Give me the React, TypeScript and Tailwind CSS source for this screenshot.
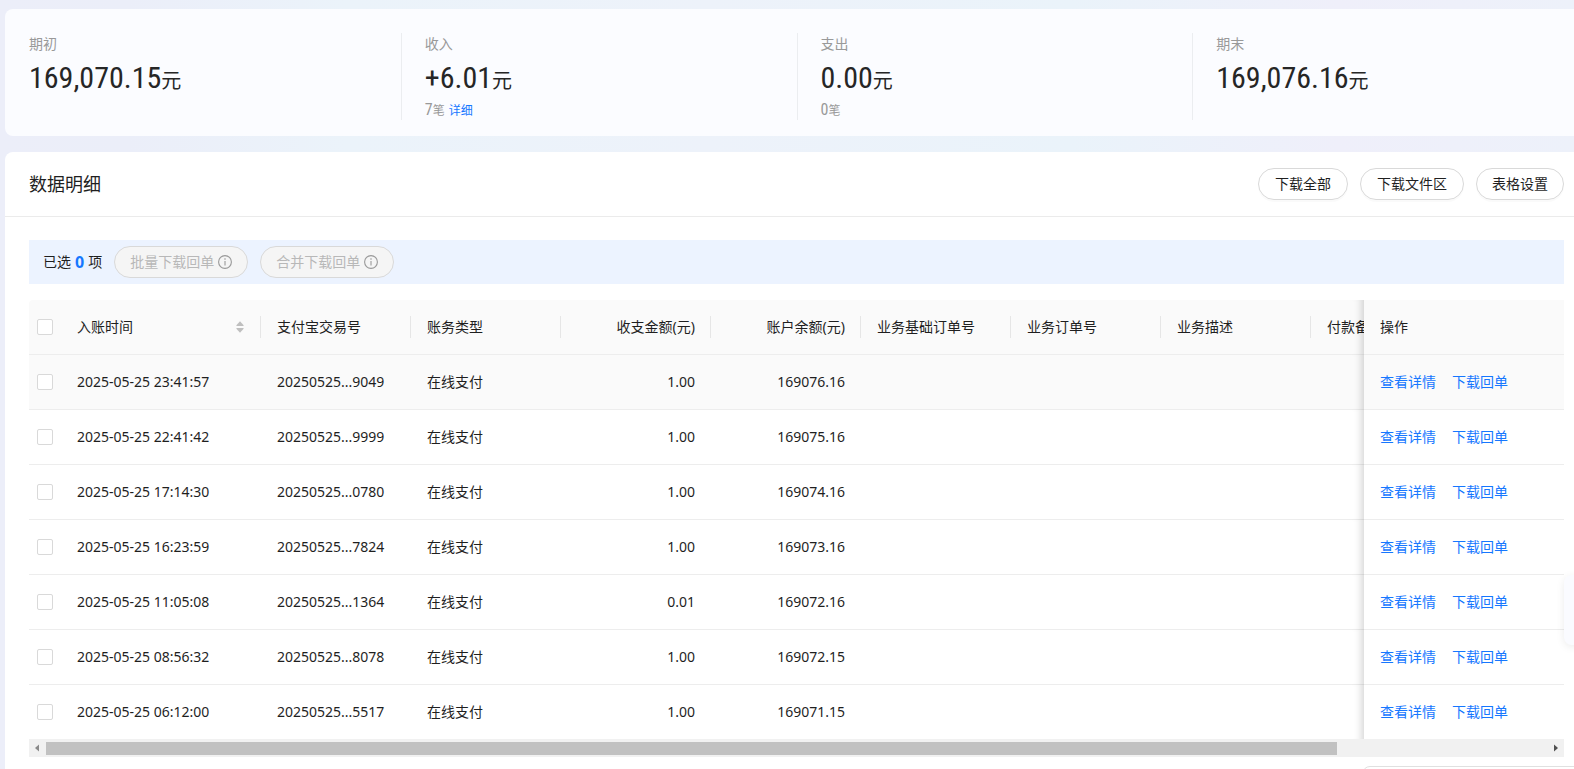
import { useState } from 'react'
import clsx from 'clsx'

type Column = {
  key: string
  title: string
  width: string
  align?: 'right'
  sortable?: boolean
}

type RecordRow = {
  time: string
  tradeNo: string
  type: string
  amount: string
  balance: string
}

const columns: Column[] = [
  { key: 'time', title: '入账时间', width: 'w-[200px]', sortable: true },
  { key: 'tradeNo', title: '支付宝交易号', width: 'w-[150px]' },
  { key: 'type', title: '账务类型', width: 'w-[150px]' },
  { key: 'amount', title: '收支金额(元)', width: 'w-[150px]', align: 'right' },
  { key: 'balance', title: '账户余额(元)', width: 'w-[150px]', align: 'right' },
  { key: 'baseOrderNo', title: '业务基础订单号', width: 'w-[150px]' },
  { key: 'orderNo', title: '业务订单号', width: 'w-[150px]' },
  { key: 'desc', title: '业务描述', width: 'w-[150px]' },
  { key: 'remark', title: '付款备注', width: 'w-[150px]' },
  { key: 'extra', title: '', width: 'w-[150px]' },
]

const rows: RecordRow[] = [
  { time: '2025-05-25 23:41:57', tradeNo: '20250525...9049', type: '在线支付', amount: '1.00', balance: '169076.16' },
  { time: '2025-05-25 22:41:42', tradeNo: '20250525...9999', type: '在线支付', amount: '1.00', balance: '169075.16' },
  { time: '2025-05-25 17:14:30', tradeNo: '20250525...0780', type: '在线支付', amount: '1.00', balance: '169074.16' },
  { time: '2025-05-25 16:23:59', tradeNo: '20250525...7824', type: '在线支付', amount: '1.00', balance: '169073.16' },
  { time: '2025-05-25 11:05:08', tradeNo: '20250525...1364', type: '在线支付', amount: '0.01', balance: '169072.16' },
  { time: '2025-05-25 08:56:32', tradeNo: '20250525...8078', type: '在线支付', amount: '1.00', balance: '169072.15' },
  { time: '2025-05-25 06:12:00', tradeNo: '20250525...5517', type: '在线支付', amount: '1.00', balance: '169071.15' },
]

const stats = [
  { label: '期初', value: '169,070.15' },
  { label: '收入', value: '+6.01', count: '7', detail: true },
  { label: '支出', value: '0.00', count: '0' },
  { label: '期末', value: '169,076.16' },
]

const checkboxClass =
  'block size-4 appearance-none rounded-xs border border-[#d9d9d9] bg-white checked:border-[#1677ff] checked:bg-[#1677ff]'

// sticky action column, with the shadow it casts on the scrolled cells
const stickyClass =
  "sticky right-0 before:pointer-events-none before:absolute before:top-0 before:-bottom-px before:-left-[30px] before:w-[30px] before:shadow-[inset_-10px_0_8px_-8px_rgba(0,0,0,0.18)] before:content-['']"

function InfoIcon() {
  return (
    <svg viewBox="0 0 14 14" className="size-3.5" fill="none" stroke="currentColor" aria-hidden="true">
      <circle cx="7" cy="7" r="6.4" strokeWidth="1.1" />
      <path d="M7 6v4.4" strokeWidth="1.1" />
      <circle cx="7" cy="4" r="0.8" fill="currentColor" stroke="none" />
    </svg>
  )
}

function SortIcon() {
  return (
    <svg viewBox="0 0 8 12" className="mr-px h-3 w-2" fill="#bfbfbf" aria-hidden="true">
      <path d="M4 0.3 7.6 4.2Q7.9 5 7.2 5H0.8Q0.1 5 0.4 4.2Z" />
      <path d="M4 11.7 7.6 7.8Q7.9 7 7.2 7H0.8Q0.1 7 0.4 7.8Z" />
    </svg>
  )
}

function StatCard({ label, value, count, detail, first }: { label: string; value: string; count?: string; detail?: boolean; first?: boolean }) {
  return (
    <div className={clsx('h-[87px] flex-1 border-l px-[23px]', first ? 'border-transparent' : 'border-[#ebedf0]')}>
      <div className="h-[22px] leading-[22px] text-[#999]">{label}</div>
      <div className="mt-[5px] flex h-9 items-baseline leading-9 text-[#262626]">
        <span className="font-['Roboto_Condensed',Roboto,sans-serif] text-3xl leading-9">{value}</span>
        <span className="text-xl leading-9">元</span>
      </div>
      {count && (
        <div className="mt-0.5 flex h-[22px] items-baseline leading-[22px] text-[#999]">
          <span className="font-['Roboto_Condensed',Roboto,sans-serif] text-base">{count}</span>
          <span className="text-xs">笔</span>
          {detail && (
            <a href="#detail" className="ml-1 text-xs text-[#1677ff]">
              详细
            </a>
          )}
        </div>
      )}
    </div>
  )
}

function BatchButton({ children }: { children: string }) {
  return (
    <button
      type="button"
      disabled
      className="flex h-8 items-center gap-1 rounded-full border border-[#d9d9d9] bg-[#f5f5f5] px-[15px] text-[#b8b8b8]"
    >
      {children}
      <span className="text-[#999]">
        <InfoIcon />
      </span>
    </button>
  )
}

export default function App() {
  const [selected, setSelected] = useState<string[]>([])

  const toggleRow = (time: string) => {
    setSelected((prev) => (prev.includes(time) ? prev.filter((item) => item !== time) : [...prev, time]))
  }

  const toggleAll = () => {
    setSelected((prev) => (prev.length === rows.length ? [] : rows.map((row) => row.time)))
  }

  return (
    <main className="relative flex h-screen flex-col gap-4 overflow-hidden bg-[linear-gradient(90deg,#eceef9_0%,#ebeef9_8%,#ebf3fa_22%,#edf2fa_45%,#eaf3fa_68%,#efeffa_85%,#edf1fa_100%)] pt-[9px] pl-[5px] font-['Noto_Sans','Noto_Sans_CJK_SC',sans-serif] text-sm text-[#1f1f1f]">
      <section className="-mr-3.5 flex rounded-lg bg-[#fbfcff] pt-6 pb-4">
        {stats.map((stat, index) => (
          <StatCard key={stat.label} {...stat} first={index === 0} />
        ))}
      </section>

      <section className="-mr-3.5 min-h-0 flex-1 rounded-t-lg bg-white">
        <header className="-mb-px flex h-[65px] items-center justify-between border-b border-[#ebebeb] px-6">
          <h1 className="text-lg">数据明细</h1>
          <div className="flex gap-3">
            <button type="button" className="h-8 rounded-full border border-[#d9d9d9] px-4 shadow-[0_2px_0_rgba(0,0,0,0.02)]">
              下载全部
            </button>
            <button type="button" className="h-8 rounded-full border border-[#d9d9d9] px-4 shadow-[0_2px_0_rgba(0,0,0,0.02)]">
              下载文件区
            </button>
            <button type="button" className="h-8 rounded-full border border-[#d9d9d9] px-[15px] shadow-[0_2px_0_rgba(0,0,0,0.02)]">
              表格设置
            </button>
          </div>
        </header>

        <div className="p-6">
          <div className="flex h-11 items-center gap-3 bg-[#ecf3ff] pl-3.5">
            <div className="flex items-center gap-1">
              已选 <strong className="text-base leading-none text-[#1677ff]">{selected.length}</strong> 项
            </div>
            <BatchButton>批量下载回单</BatchButton>
            <BatchButton>合并下载回单</BatchButton>
          </div>

          <div className="mt-4 overflow-x-auto rounded-tl-sm [scrollbar-width:none]">
            <table className="w-[1782px] table-fixed border-separate border-spacing-0">
              <thead>
                <tr className="h-[55px]">
                  <th className="w-8 border-b border-[#ededed] bg-[#fafafa] px-2">
                    <input
                      type="checkbox"
                      aria-label="全选"
                      className={checkboxClass}
                      checked={selected.length === rows.length}
                      onChange={toggleAll}
                    />
                  </th>
                  {columns.map((column) => (
                    <th
                      key={column.key}
                      className={clsx(
                        "relative border-b border-[#ededed] bg-[#fafafa] px-4 font-normal after:absolute after:top-4 after:right-0 after:h-[22px] after:w-px after:bg-[#e6e6e6] after:content-['']",
                        column.width,
                        column.align === 'right' ? 'text-right' : 'text-left',
                      )}
                    >
                      {column.sortable ? (
                        <div className="flex items-center justify-between">
                          {column.title}
                          <SortIcon />
                        </div>
                      ) : (
                        column.title
                      )}
                    </th>
                  ))}
                  <th className={clsx('w-[200px] border-b border-[#ededed] bg-[#fafafa] px-4 text-left font-normal', stickyClass)}>
                    操作
                  </th>
                </tr>
              </thead>
              <tbody>
                {rows.map((row, index) => {
                  const cell = clsx(
                    'border-[#ededed]',
                    index === rows.length - 1 ? 'h-[54px]' : 'h-[55px] border-b',
                    index === 0 ? 'bg-[#fafafa]' : 'bg-white',
                  )

                  return (
                    <tr key={row.time}>
                      <td className={clsx(cell, 'px-2')}>
                        <input
                          type="checkbox"
                          aria-label={row.time}
                          className={checkboxClass}
                          checked={selected.includes(row.time)}
                          onChange={() => toggleRow(row.time)}
                        />
                      </td>
                      <td className={clsx(cell, 'px-4')}>{row.time}</td>
                      <td className={clsx(cell, 'px-4')}>{row.tradeNo}</td>
                      <td className={clsx(cell, 'px-4')}>{row.type}</td>
                      <td className={clsx(cell, 'px-4 text-right')}>{row.amount}</td>
                      <td className={clsx(cell, 'px-4 text-right')}>{row.balance}</td>
                      <td className={cell} />
                      <td className={cell} />
                      <td className={cell} />
                      <td className={cell} />
                      <td className={cell} />
                      <td className={clsx(cell, 'px-4', stickyClass)}>
                        <div className="flex gap-4 text-[#1677ff]">
                          <a href="#view">查看详情</a>
                          <a href="#receipt">下载回单</a>
                        </div>
                      </td>
                    </tr>
                  )
                })}
              </tbody>
            </table>
          </div>

          <div className="flex h-[18px] items-center bg-[#f1f1f1]">
            <svg viewBox="0 0 17 18" className="h-[18px] w-[17px] shrink-0" fill="#8a8a8a" aria-hidden="true">
              <path d="M10 5.5v7L6 9z" />
            </svg>
            <div className="flex-1">
              <div className="h-[13px] w-[86%] bg-[#c1c1c1]" />
            </div>
            <svg viewBox="0 0 17 18" className="h-[18px] w-[17px] shrink-0" fill="#505050" aria-hidden="true">
              <path d="M7 5.5v7L11 9z" />
            </svg>
          </div>

          <div className="mt-[9px] -mr-6 ml-auto h-8 w-[226px] rounded-lg border border-[#e0e0e0]" />
        </div>
      </section>

      <div className="absolute top-[575px] -right-2 h-[70px] w-[18px] rounded-lg bg-[#fafbff] shadow-[0_2px_8px_rgba(0,0,0,0.08)]" />
    </main>
  )
}
